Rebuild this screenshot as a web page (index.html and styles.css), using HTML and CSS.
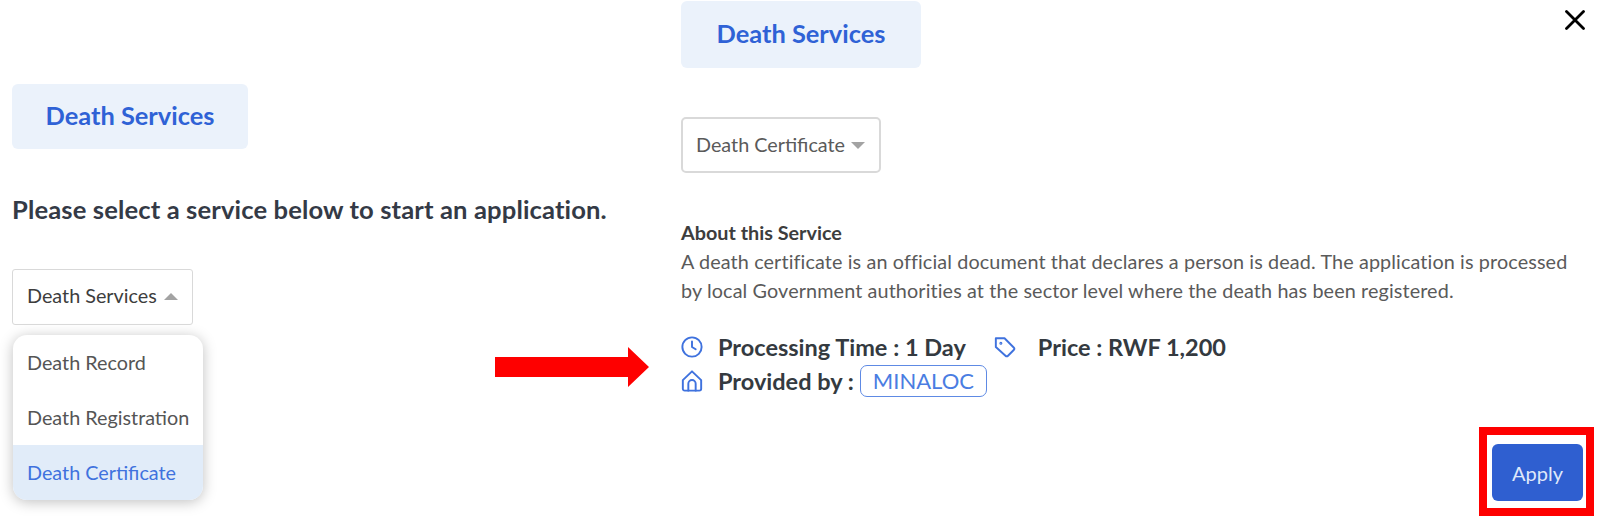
FILE: index.html
```html
<!DOCTYPE html>
<html lang="en">
<head>
    <meta charset="UTF-8">
    <meta name="viewport" content="width=device-width, initial-scale=1.0">
    <title>Death Services</title>
    <link rel="stylesheet" href="styles.css">
</head>
<body>
    <div class="page">
        <section class="left">
            <div class="category">Death Services</div>
            <h2 class="prompt">Please select a service below to start an application.</h2>
            <div class="select select-open">
                <span>Death Services</span>
                <span class="caret caret-up"></span>
            </div>
            <ul class="menu">
                <li>Death Record</li>
                <li>Death Registration</li>
                <li class="active">Death Certificate</li>
            </ul>
        </section>

        <section class="right">
            <div class="category category-wide">Death Services</div>
            <div class="select select-service">
                <span>Death Certificate</span>
                <span class="caret caret-down"></span>
            </div>
            <h3 class="about-title">About this Service</h3>
            <p class="about-text">A death certificate is an official document that declares a person is dead. The application is processed by local Government authorities at the sector level where the death has been registered.</p>
            <div class="meta">
                <div class="meta-row">
                    <svg class="icon" viewBox="0 0 24 24"><circle cx="12" cy="12" r="10.500"/><path d="M12 6v6l4 2.500"/></svg>
                    <span>Processing Time : 1 Day</span>
                    <svg class="icon icon-tag" viewBox="0 0 24 24"><path d="M2 2.500h9.500l10 10a2 2 0 0 1 0 2.800l-6.200 6.200a2 2 0 0 1-2.800 0L2 12z"/><circle cx="7.500" cy="8" r="0.600"/></svg>
                    <span>Price : RWF 1,200</span>
                </div>
                <div class="meta-row">
                    <svg class="icon" viewBox="0 0 24 24"><path d="M2 11 12 1.500 22 11v9.500a2 2 0 0 1-2 2H4a2 2 0 0 1-2-2z"/><path d="M8 22.500V15a4 4 0 0 1 8 0v7.500"/></svg>
                    <span>Provided by :</span>
                    <span class="badge">MINALOC</span>
                </div>
            </div>
            <div class="actions">
                <div class="highlight">
                    <button class="apply">Apply</button>
                </div>
            </div>
        </section>

        <svg class="arrow" viewBox="0 0 154 40"><path d="M0 10h133V0l21 20-21 20V30H0z"/></svg>
        <svg class="close" viewBox="0 0 20 20"><path d="M1.500 1.500l17 17M18.500 1.500l-17 17"/></svg>
    </div>
</body>
</html>
```

FILE: styles.css
```css
* {
    margin: 0;
    padding: 0;
    box-sizing: border-box;
}

body {
    font-family: 'Lato', 'Open Sans', sans-serif;
    background: #fff;
    color: #343a40;
    overflow: hidden;
}

.page {
    position: relative;
    display: flex;
    width: 1600px;
    height: 521px;
}

.left {
    width: 681px;
    padding: 84px 0 0 12px;
}

.right {
    flex: 1;
    padding-top: 1px;
}

.category {
    display: flex;
    align-items: center;
    justify-content: center;
    width: 236px;
    height: 65px;
    padding-bottom: 3px;
    background: #ebf2fb;
    border-radius: 6px;
    color: #2f62d6;
    font-size: 25.400px;
    font-weight: 700;
}

.category-wide {
    width: 240px;
    height: 67px;
}

.prompt {
    margin-top: 45px;
    font-size: 25.600px;
    line-height: 30px;
    font-weight: 700;
    letter-spacing: 0.120px;
    color: #343a46;
}

.select {
    display: inline-flex;
    align-items: center;
    gap: 7px;
    margin-top: 45px;
    padding: 0 14px 5px;
    height: 56px;
    border: 1px solid #d9d9d9;
    border-radius: 3px;
    font-size: 19.800px;
    white-space: nowrap;
    color: #3d3d3d;
}

.select-service {
    display: flex;
    width: 200px;
    margin-top: 49px;
    padding: 0 13px 3px;
    gap: 6px;
    border-width: 2px;
    border-radius: 5px;
    color: #5a5a5a;
}

.caret {
    width: 0;
    height: 0;
    margin-top: 4px;
    border-left: 7px solid transparent;
    border-right: 7px solid transparent;
}

.caret-up {
    border-bottom: 7px solid #a3a3a3;
}

.caret-down {
    border-top: 7px solid #a3a3a3;
}

.menu {
    list-style: none;
    width: 190px;
    margin: 10px 0 0 1px;
    background: #fff;
    border-radius: 14px;
    overflow: hidden;
    box-shadow: 0 2px 14px rgba(0, 0, 0, 0.25);
    font-size: 19.800px;
    color: #555;
}

.menu li {
    display: flex;
    align-items: center;
    height: 55px;
    padding: 0 0 2px 14px;
}

.menu .active {
    background: #e1ecf9;
    color: #3f72de;
}

.about-title {
    margin: 46px 0 2px;
    font-size: 19.800px;
    line-height: 26px;
    font-weight: 700;
    color: #3d3d3d;
}

.about-text {
    width: 900px;
    font-size: 19.800px;
    line-height: 29px;
    letter-spacing: 0.120px;
    color: #5a5a5a;
}

.meta {
    margin-top: 26px;
    font-size: 23.500px;
    font-weight: 700;
    color: #343a40;
}

.meta-row {
    display: flex;
    align-items: center;
    height: 32px;
}

.meta-row + .meta-row {
    margin-top: 2px;
}

.icon {
    width: 22px;
    height: 22px;
    margin-right: 15px;
    fill: none;
    stroke: #3f72de;
    stroke-width: 2.100;
    stroke-linejoin: round;
    stroke-linecap: round;
}

.icon-tag {
    margin-left: 28px;
    margin-right: 22px;
}

.badge {
    margin-left: 6px;
    padding: 0 12px;
    height: 32px;
    font-size: 22px;
    line-height: 30px;
    border: 1.500px solid #5e8ae4;
    border-radius: 7px;
    color: #4a7de2;
    font-weight: 400;
}

.actions {
    display: flex;
    justify-content: flex-end;
    margin-top: 30px;
    padding-right: 6px;
}

.highlight {
    padding: 9px 3px 7px 5px;
    border: 8px solid #fe0000;
}

.apply {
    display: block;
    width: 91px;
    height: 57px;
    background: #2f5fd0;
    border: none;
    border-radius: 6px;
    color: #dfe8fa;
    font-family: inherit;
    font-size: 20px;
}

.arrow {
    position: absolute;
    left: 495px;
    top: 347px;
    width: 154px;
    height: 40px;
    fill: #fe0000;
}

.close {
    position: absolute;
    left: 1565px;
    top: 10px;
    width: 20px;
    height: 20px;
    fill: none;
    stroke: #000;
    stroke-width: 2.800;
    stroke-linecap: round;
}
```
